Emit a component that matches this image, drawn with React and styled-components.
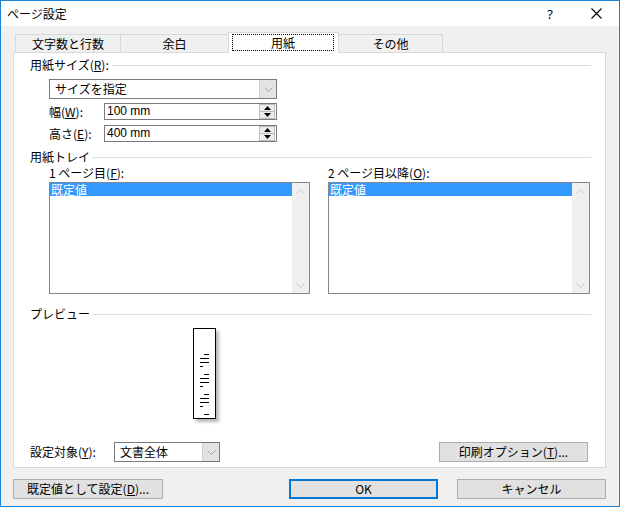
import React from 'react';
import styled, { createGlobalStyle } from 'styled-components';

const GlobalStyle = createGlobalStyle`
  html, body { margin: 0; padding: 0; background: #fff; }
  body {
    font-family: "Noto Sans CJK JP", "Noto Sans", sans-serif;
    font-size: 12px;
    color: #000;
  }
  * { box-sizing: border-box; }
`;

const Window = styled.div`
  width: 620px;
  height: 507px;
  border: 1px solid #1883d7;
  background: #f0f0f0;
  display: flex;
  flex-direction: column;
`;

const TitleBar = styled.div`
  height: 25px;
  background: #fff;
  display: flex;
  align-items: center;
  padding-left: 6px;
`;

const Title = styled.div`
  flex: 1;
  font-size: 12px;
  line-height: 16px;
`;

const TitleButton = styled.div`
  width: 46px;
  height: 25px;
  display: flex;
  align-items: center;
  justify-content: center;
  font-family: "Noto Sans", sans-serif;
  font-size: 13px;
`;

const Body = styled.div`
  flex: 1;
  padding: 6px 13px 0 12px;
  display: flex;
  flex-direction: column;
`;

const TabStrip = styled.div`
  height: 20px;
  display: flex;
  align-items: flex-end;
  padding-left: 2px;
  position: relative;
  z-index: 1;
`;

const Tab = styled.div`
  width: ${p => p.$w}px;
  height: ${p => (p.$active ? 21 : 18)}px;
  margin-left: ${p => (p.$first ? 0 : -1)}px;
  margin-bottom: ${p => (p.$active ? -1 : 0)}px;
  background: ${p => (p.$active ? '#fff' : '#f0f0f0')};
  border: 1px solid #d9d9d9;
  border-bottom: none;
  display: flex;
  align-items: ${p => (p.$active ? 'flex-start' : 'center')};
  justify-content: center;
  padding: ${p => (p.$active ? '1px 4px 0 3px' : '0')};
  line-height: 14px;
  position: relative;
  z-index: ${p => (p.$active ? 2 : 1)};
`;

const FocusRing = styled.div`
  flex: 1;
  height: 17px;
  border: 1px dotted #000;
  display: flex;
  align-items: center;
  justify-content: center;
`;

const Panel = styled.div`
  height: 416px;
  background: #fff;
  border: 1px solid #d9d9d9;
  padding: 5px 14px 5px 16px;
  display: flex;
  flex-direction: column;
`;

const SectionHeader = styled.div`
  display: flex;
  align-items: center;
  height: 14px;
  line-height: 14px;
  margin-top: ${p => p.$mt || 0}px;
  white-space: nowrap;
  &::after {
    content: '';
    flex: 1;
    height: 1px;
    background: #dcdcdc;
    margin-left: 3px;
    margin-top: 1px;
  }
`;

const Combo = styled.div`
  display: flex;
  width: ${p => p.$w}px;
  height: 20px;
  margin-top: ${p => p.$mt || 0}px;
  margin-left: ${p => p.$ml || 0}px;
  border: 1px solid #7a7a7a;
  background: #fff;
`;

const ComboText = styled.div`
  flex: 1;
  padding-left: 5px;
  line-height: 18px;
`;

const ComboButton = styled.div`
  width: 17px;
  background: #e3e3e3;
  border-left: 1px solid #cfcfcf;
  display: flex;
  align-items: center;
  justify-content: center;
`;

const FieldRow = styled.div`
  display: flex;
  align-items: center;
  margin-left: 19px;
  margin-top: ${p => p.$mt || 0}px;
`;

const FieldLabel = styled.div`
  width: ${p => p.$w}px;
  line-height: 14px;
`;

const SpinInput = styled.div`
  width: 173px;
  height: 17px;
  border: 1px solid #7a7a7a;
  display: flex;
  background: #fff;
`;

const SpinText = styled.div`
  flex: 1;
  padding-left: 2px;
  line-height: 15px;
  font-family: "Liberation Sans", sans-serif;
  font-size: 12px;
`;

const SpinBox = styled.div`
  width: 17px;
  display: flex;
  flex-direction: column;
  padding: 0 1px 0 0;
`;

const SpinArrow = styled.div`
  flex: 1;
  background: #ececec;
  border: 1px solid #bdbdbd;
  margin-top: ${p => (p.$down ? -1 : 0)}px;
  display: flex;
  align-items: center;
  justify-content: center;
`;

const TrayGrid = styled.div`
  display: grid;
  grid-template-columns: 261px 262px;
  column-gap: 18px;
  margin-left: 19px;
  margin-top: 2px;
`;

const TrayColumn = styled.div`
  display: flex;
  flex-direction: column;
`;

const TrayLabel = styled.div`
  line-height: 14px;
  margin-bottom: 2px;
`;

const ListBox = styled.div`
  height: 112px;
  border: 1px solid #828790;
  background: #fff;
  display: flex;
`;

const ListItems = styled.div`
  flex: 1;
`;

const ListItem = styled.div`
  height: 13px;
  line-height: 13px;
  background: ${p => (p.$selected ? '#3399ff' : 'transparent')};
  color: ${p => (p.$selected ? '#fff' : '#000')};
  padding-left: 1px;
`;

const ScrollBar = styled.div`
  width: 17px;
  background: #f0f0f0;
  display: flex;
  flex-direction: column;
  justify-content: space-between;
  align-items: center;
  padding: 6px 0 5px;
`;

const PreviewArea = styled.div`
  flex: 1;
  padding: 7px 0 0 163px;
`;

const PreviewPage = styled.div`
  width: 23px;
  height: 91px;
  border: 1px solid #000;
  background: #fff;
  box-shadow: 3px 3px 3px rgba(0, 0, 0, 0.28);
`;

const BottomRow = styled.div`
  display: flex;
  align-items: center;
  padding-right: 3px;
`;

const Spacer = styled.div`
  flex: 1;
`;

const Button = styled.div`
  width: ${p => p.$w}px;
  height: 20px;
  background: #e1e1e1;
  border: ${p => (p.$default ? '2px solid #0078d7' : '1px solid #adadad')};
  display: flex;
  align-items: center;
  justify-content: center;
  line-height: 14px;
`;

const Footer = styled.div`
  display: flex;
  margin-top: 11px;
`;

const FooterRight = styled.div`
  display: flex;
  gap: 19px;
  margin-left: auto;
`;

const Chevron = ({ up, color = '#a6a6a6' }) => (
  <svg width="9" height="5" viewBox="0 0 9 5">
    <polyline
      points={up ? '0.5,4.5 4.5,0.5 8.5,4.5' : '0.5,0.5 4.5,4.5 8.5,0.5'}
      fill="none"
      stroke={color}
      strokeWidth="1"
    />
  </svg>
);

const Triangle = ({ down }) => (
  <svg width="7" height="4" viewBox="0 0 7 4">
    <polygon points={down ? '0,0 7,0 3.5,4' : '0,4 7,4 3.5,0'} fill="#000" />
  </svg>
);

const CloseIcon = () => (
  <svg width="11" height="11" viewBox="0 0 11 11">
    <path d="M0.5 0.5 L10.5 10.5 M10.5 0.5 L0.5 10.5" stroke="#000" strokeWidth="1.1" />
  </svg>
);

const PageLines = () => {
  const groups = [25, 45, 65];
  return (
    <svg width="21" height="89" viewBox="0 0 21 89" shapeRendering="crispEdges">
      {groups.map(y => (
        <g key={y} fill="#000">
          <rect x="10" y={y} width="5" height="1" />
          <rect x="6" y={y + 4} width="9" height="1" />
          <rect x="6" y={y + 8} width="9" height="1" />
          <rect x="6" y={y + 12} width="3" height="1" />
        </g>
      ))}
      <rect x="10" y="85" width="5" height="1" fill="#000" />
    </svg>
  );
};

const Spin = ({ value }) => (
  <SpinInput>
    <SpinText>{value}</SpinText>
    <SpinBox>
      <SpinArrow><Triangle /></SpinArrow>
      <SpinArrow $down><Triangle down /></SpinArrow>
    </SpinBox>
  </SpinInput>
);

const Tray = ({ label }) => (
  <TrayColumn>
    <TrayLabel>{label}</TrayLabel>
    <ListBox>
      <ListItems>
        <ListItem $selected>既定値</ListItem>
      </ListItems>
      <ScrollBar>
        <Chevron up color="#c2c2c2" />
        <Chevron color="#c2c2c2" />
      </ScrollBar>
    </ListBox>
  </TrayColumn>
);

const tabs = [
  { label: '文字数と行数', w: 106 },
  { label: '余白', w: 109 },
  { label: '用紙', w: 111, active: true },
  { label: 'その他', w: 105 },
];

export default function App() {
  return (
    <>
      <GlobalStyle />
      <Window>
        <TitleBar>
          <Title>ページ設定</Title>
          <TitleButton>?</TitleButton>
          <TitleButton><CloseIcon /></TitleButton>
        </TitleBar>
        <Body>
          <TabStrip>
            {tabs.map((t, i) => (
              <Tab key={t.label} $w={t.w} $active={t.active} $first={i === 0}>
                {t.active ? <FocusRing>{t.label}</FocusRing> : t.label}
              </Tab>
            ))}
          </TabStrip>
          <Panel>
            <SectionHeader>用紙サイズ(<u>R</u>):</SectionHeader>
            <Combo $w={228} $mt={7} $ml={19}>
              <ComboText>サイズを指定</ComboText>
              <ComboButton><Chevron /></ComboButton>
            </Combo>
            <FieldRow $mt={4}>
              <FieldLabel $w={55}>幅(<u>W</u>):</FieldLabel>
              <Spin value="100 mm" />
            </FieldRow>
            <FieldRow $mt={5}>
              <FieldLabel $w={55}>高さ(<u>E</u>):</FieldLabel>
              <Spin value="400 mm" />
            </FieldRow>

            <SectionHeader $mt={8}>用紙トレイ</SectionHeader>
            <TrayGrid>
              <Tray label={<>1 ページ目(<u>F</u>):</>} />
              <Tray label={<>2 ページ目以降(<u>O</u>):</>} />
            </TrayGrid>

            <SectionHeader $mt={13}>プレビュー</SectionHeader>
            <PreviewArea>
              <PreviewPage>
                <PageLines />
              </PreviewPage>
            </PreviewArea>

            <BottomRow>
              <FieldLabel $w={84}>設定対象(<u>Y</u>):</FieldLabel>
              <Combo $w={106}>
                <ComboText>文書全体</ComboText>
                <ComboButton><Chevron /></ComboButton>
              </Combo>
              <Spacer />
              <Button $w={149}>印刷オプション(<u>T</u>)...</Button>
            </BottomRow>
          </Panel>
          <Footer>
            <Button $w={150}>既定値として設定(<u>D</u>)...</Button>
            <FooterRight>
              <Button $w={149} $default>OK</Button>
              <Button $w={149}>キャンセル</Button>
            </FooterRight>
          </Footer>
        </Body>
      </Window>
    </>
  );
}
